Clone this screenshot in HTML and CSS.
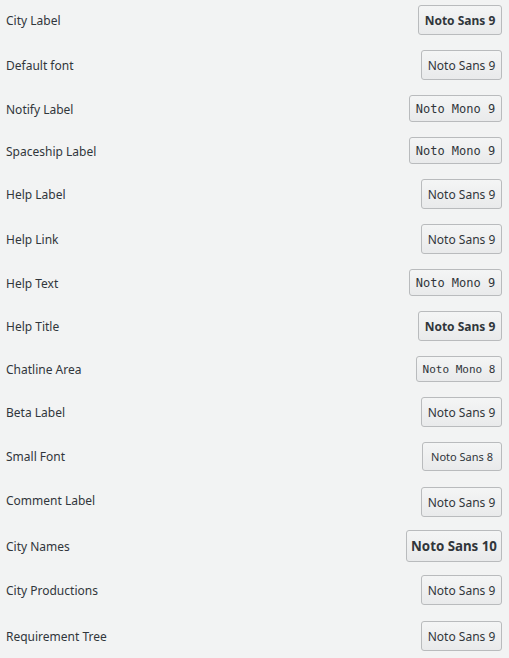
FILE: index.html
```html
<!DOCTYPE html>
<html>
<head>
<meta charset="utf-8">
<link rel="stylesheet" href="styles.css">
</head>
<body>
<div class="list">
  <div class="row r45"><span class="label">City Label</span><button class="btn sans9b">Noto Sans 9</button></div>
  <div class="row r45"><span class="label">Default font</span><button class="btn sans9">Noto Sans 9</button></div>
  <div class="row r42"><span class="label">Notify Label</span><button class="btn mono9">Noto Mono 9</button></div>
  <div class="row r42"><span class="label">Spaceship Label</span><button class="btn mono9">Noto Mono 9</button></div>
  <div class="row r45"><span class="label">Help Label</span><button class="btn sans9">Noto Sans 9</button></div>
  <div class="row r45"><span class="label">Help Link</span><button class="btn sans9">Noto Sans 9</button></div>
  <div class="row r42"><span class="label">Help Text</span><button class="btn mono9">Noto Mono 9</button></div>
  <div class="row r45"><span class="label">Help Title</span><button class="btn sans9b">Noto Sans 9</button></div>
  <div class="row r41"><span class="label">Chatline Area</span><button class="btn mono8">Noto Mono 8</button></div>
  <div class="row r45"><span class="label">Beta Label</span><button class="btn sans9">Noto Sans 9</button></div>
  <div class="row r45 small"><span class="label">Small Font</span><button class="btn sans8">Noto Sans 8</button></div>
  <div class="row r43 tight"><span class="label">Comment Label</span><button class="btn sans9">Noto Sans 9</button></div>
  <div class="row r45 large"><span class="label">City Names</span><button class="btn sans10b">Noto Sans 10</button></div>
  <div class="row r46"><span class="label">City Productions</span><button class="btn sans9">Noto Sans 9</button></div>
  <div class="row r45"><span class="label">Requirement Tree</span><button class="btn sans9">Noto Sans 9</button></div>
</div>
</body>
</html>
```

FILE: styles.css
```css
html, body {
  margin: 0;
  padding: 0;
  background: #f2f3f3;
}
body {
  font-family: "Noto Sans", "DejaVu Sans", sans-serif;
  font-size: 12px;
  color: #31363b;
}
.list {
  display: flex;
  flex-direction: column;
  padding: 5px 7px 0 6px;
}
.row {
  display: flex;
  align-items: flex-start;
  justify-content: space-between;
}
.r41 { height: 41px; }
.r42 { height: 42px; }
.r43 { height: 43px; }
.r45 { height: 45px; }
.r46 { height: 46px; }
.label {
  display: flex;
  align-items: center;
  height: 30px;
  font-size: 12px;
  color: #31363b;
}
.r41 .label { height: 26px; }
.r42 .label { height: 29px; }
.small .label { height: 28px; }
.large .label { height: 33px; }
.tight .label { height: 27px; }
.btn {
  box-sizing: border-box;
  border: 1px solid #b9bbbd;
  border-radius: 3px;
  background: linear-gradient(#f4f5f5, #e9eaeb);
  color: #31363b;
  padding: 0;
  margin: 0;
  display: flex;
  align-items: center;
  justify-content: center;
  font-family: "Noto Sans", "DejaVu Sans", sans-serif;
  font-size: 12px;
}
.sans9 { width: 81px; height: 30px; }
.sans9b { width: 84px; height: 30px; font-weight: bold; }
.mono9 { width: 93px; height: 27px; font-family: "DejaVu Sans Mono", "Liberation Mono", monospace; font-size: 12px; }
.mono8 { width: 86px; height: 26px; font-family: "DejaVu Sans Mono", "Liberation Mono", monospace; font-size: 11px; }
.sans8 { width: 80px; height: 29px; font-size: 11px; }
.sans10b { width: 96px; height: 32px; font-size: 13.3px; font-weight: bold; }
```
